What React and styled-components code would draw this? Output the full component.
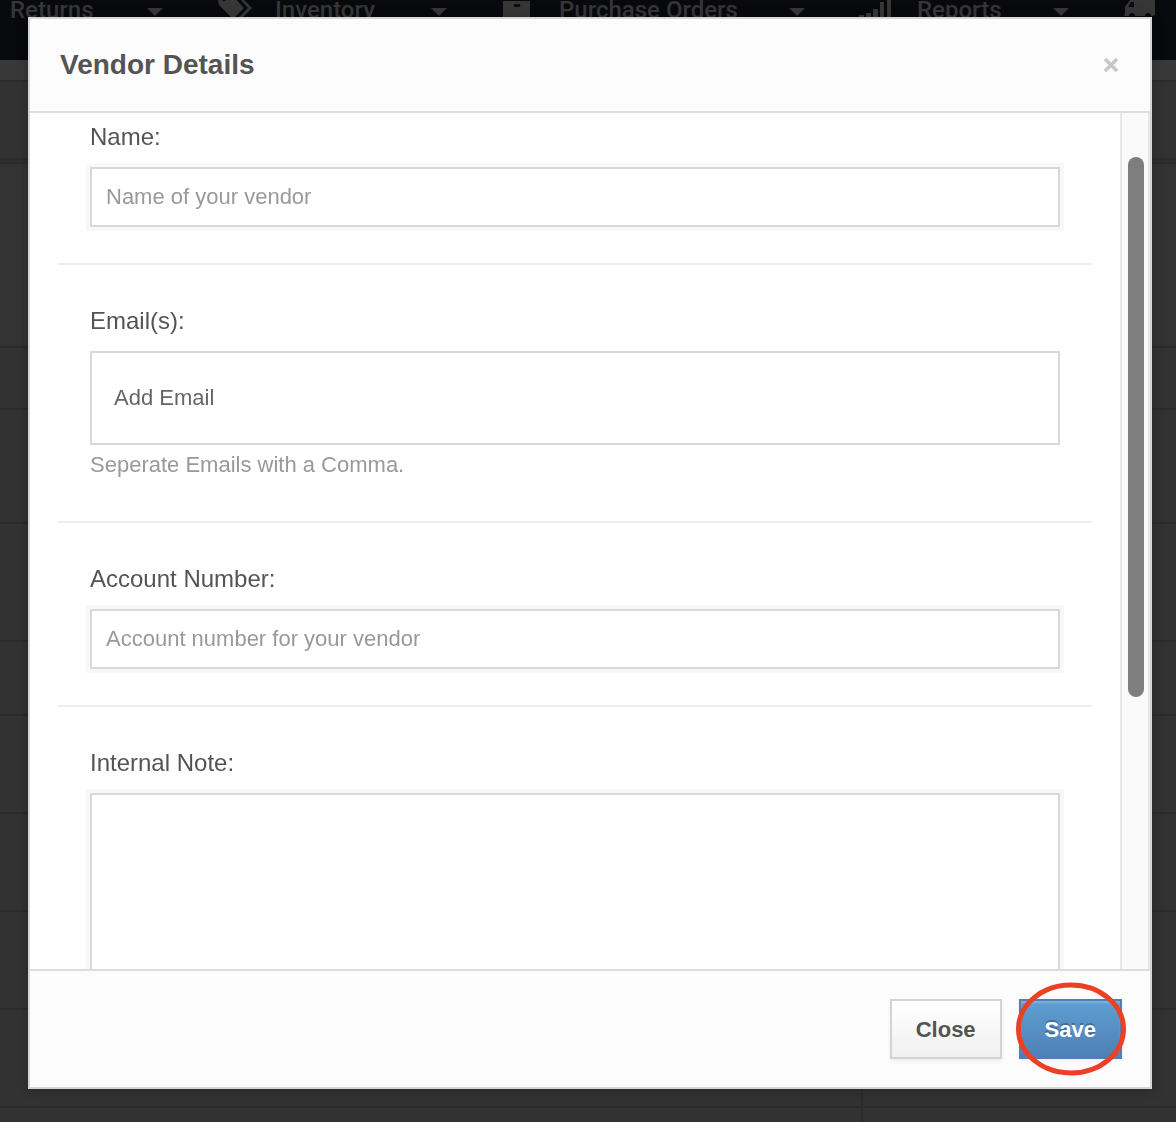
import React, { useState } from "react";
import styled, { createGlobalStyle } from "styled-components";

const GlobalStyle = createGlobalStyle`
  *, *::before, *::after { box-sizing: border-box; }
  body {
    margin: 0;
    background: #323232;
    color: #545454;
    font-family: "Liberation Sans", Arial, Helvetica, sans-serif;
  }
`;

const Page = styled.div`
  height: 100vh;
  overflow: hidden;
`;

const Nav = styled.nav`
  height: 60px;
  display: flex;
  align-items: flex-start;
  background: #08090d;
  overflow: hidden;
`;

const NavItem = styled.a`
  flex: none;
  width: ${(p) => p.$width}px;
  height: 20px;
  display: flex;
  align-items: center;
  padding-left: ${(p) => (p.$flush ? 10 : 0)}px;
  color: #363636;
  font: 500 24px/28px Roboto, Inter, sans-serif;
  text-decoration: none;
  white-space: nowrap;
`;

const NavIcon = styled.svg`
  flex: none;
  width: 36px;
  height: 28px;
  margin-right: 22px;
  fill: #363636;
`;

const Caret = styled.span`
  margin-left: auto;
  margin-right: 54px;
  margin-top: 4px;
  border: 8px solid transparent;
  border-top-color: #363636;
  border-bottom: 0;
`;

const PageRow = styled.div`
  display: grid;
  grid-template-columns: 1fr 313px;
  height: ${(p) => p.$height}px;
  border-bottom: 2px solid #2b2b2b;
  background: ${(p) => p.$tone || "#323232"};
`;

const PageCell = styled.div`
  border-right: 2px solid #2b2b2b;
`;

const Overlay = styled.div`
  position: fixed;
  inset: 0;
  display: flex;
  padding: 17px 24px 33px 28px;
`;

const Modal = styled.section`
  flex: 1;
  min-width: 0;
  display: flex;
  flex-direction: column;
  border: 2px solid #d6d6d6;
  background: #fff;
  box-shadow: 0 2px 12px rgba(0, 0, 0, 0.2);
`;

const Header = styled.header`
  display: flex;
  align-items: center;
  justify-content: space-between;
  padding: 28px 30px;
  border-bottom: 2px solid #dedede;
  background: #fcfcfc;
`;

const Title = styled.h2`
  margin: 0;
  font-size: 28px;
  line-height: 36px;
`;

const Dismiss = styled.button`
  display: flex;
  padding: 2px 1px;
  border: 0;
  background: none;
  svg {
    width: 16px;
    height: 16px;
    stroke: #c8c8c8;
    stroke-width: 3.6;
  }
`;

const Body = styled.div`
  flex: 1;
  min-height: 0;
  display: flex;
`;

const Form = styled.form`
  flex: 1;
  min-width: 0;
  padding: 0 28px;
  overflow-y: auto;
  scrollbar-width: none;
`;

const Field = styled.div`
  display: flex;
  flex-direction: column;
  padding: ${(p) => (p.$first ? 12 : 44)}px 32px 36px;
  border-bottom: 2px solid #eee;
`;

const Label = styled.label`
  margin-bottom: 18px;
  font-size: 24px;
  line-height: 24px;
`;

const Input = styled.input`
  width: 100%;
  height: ${(p) => (p.$tall ? 94 : 60)}px;
  padding: 0 ${(p) => (p.$tall ? 22 : 14)}px;
  border: 2px solid #d8d8d8;
  border-radius: 0;
  background: #fff;
  box-shadow: ${(p) => (p.$tall ? "none" : "0 0 0 4px #f8f8f8")};
  color: #545454;
  font: 22px/28px "Liberation Sans", Arial, sans-serif;
  outline: 0;
  &::placeholder {
    color: ${(p) => (p.$tall ? "#666" : "#999")};
    opacity: 1;
  }
`;

const TextArea = styled(Input)`
  height: 240px;
  padding: 14px;
  resize: none;
`;

const Help = styled.p`
  margin: 8px 0;
  color: #999;
  font-size: 22px;
  line-height: 24px;
`;

const ScrollTrack = styled.div`
  flex: none;
  width: 30px;
  padding: 44px 4px 0 6px;
  border: solid #e8e8e8;
  border-width: 0 2px;
  background: #fafafa;
`;

const ScrollThumb = styled.div`
  width: 16px;
  height: 540px;
  border-radius: 8px;
  background: #7e7e7e;
`;

const Footer = styled.footer`
  display: flex;
  justify-content: flex-end;
  gap: 17px;
  padding: 28px;
  border-top: 2px solid #dcdcdc;
  background: #fcfcfc;
`;

const Button = styled.button`
  height: 60px;
  padding: 2px 24px 0;
  border: 2px solid ${(p) => (p.$primary ? "#4d80b6" : "#d4d4d4")};
  border-radius: 0;
  background: ${(p) =>
    p.$primary
      ? "linear-gradient(#5e9fd3, #4f80b5)"
      : "linear-gradient(#fff, #f0f0f0)"};
  box-shadow: ${(p) =>
    p.$primary
      ? "inset 0 2px 2px rgba(255, 255, 255, 0.2), 0 2px 4px rgba(0, 0, 0, 0.06)"
      : "0 2px 4px rgba(0, 0, 0, 0.06)"};
  color: ${(p) => (p.$primary ? "#fff" : "#545454")};
  font: bold 22px/28px "Liberation Sans", Arial, sans-serif;
  text-shadow: ${(p) => (p.$primary ? "0 -2px 0 rgba(0, 0, 0, 0.25)" : "none")};
`;

const Highlighted = styled.div`
  position: relative;
`;

const Ring = styled.svg`
  position: absolute;
  left: 50%;
  top: 50%;
  width: 112px;
  height: 94px;
  transform: translate(-50%, -50%);
  fill: none;
  stroke: #eb4026;
  stroke-width: 5;
  pointer-events: none;
`;

const icons = {
  tags: (
    <>
      <path fillRule="evenodd" d="M1 0h15l11 12-11 11L3 10Q1 8 1 5ZM5 3a2 2 0 1 0 4 0a2 2 0 1 0-4 0Z" />
      <path d="M20 0h3l12 12-11 11-2-2 9-9Z" />
    </>
  ),
  box: <path fillRule="evenodd" d="M2 5h27v23H2ZM14 8q-3 1 0 3h4q3-2 0-3Z" />,
  chart: <path d="M0 19h5v9H0ZM7 17h5v11H7ZM14 13h5v15h-5ZM21 6h4v22h-4ZM28 2h4v26h-4Z" />,
  truck: (
    <path
      fillRule="evenodd"
      d="M12 3h20v16l-3 1h-1a3 3 0 0 0-6 0H12a3 3 0 0 0-6 0H2l-1-1 1-1V11l5-7ZM5 11h6V6H8Z"
    />
  ),
};

const navItems = [
  { text: "Returns", width: 217 },
  { text: "Inventory", width: 284, icon: "tags" },
  { text: "Purchase Orders", width: 358, icon: "box" },
  { text: "Reports", width: 264, icon: "chart" },
];

const pageRows = [
  { height: 22, tone: "#383838" },
  { height: 78 },
  { height: 4, tone: "#2e2e2e" },
  { height: 184, tone: "#333" },
  { height: 62 },
  { height: 114 },
  { height: 118 },
  { height: 74 },
  { height: 98 },
  { height: 98 },
  { height: 98 },
  { height: 98 },
  { height: 98 },
];

function Icon({ name }) {
  return (
    <NavIcon viewBox="0 0 36 28" aria-hidden="true">
      {icons[name]}
    </NavIcon>
  );
}

export default function App() {
  const [values, setValues] = useState({ name: "", emails: "", account: "", note: "" });
  const bind = (key) => ({
    id: key,
    value: values[key],
    onChange: (e) => setValues({ ...values, [key]: e.target.value }),
  });

  return (
    <>
      <GlobalStyle />
      <Page>
        <Nav>
          {navItems.map((item) => (
            <NavItem key={item.text} href="#" $width={item.width} $flush={!item.icon}>
              {item.icon && <Icon name={item.icon} />}
              {item.text}
              <Caret />
            </NavItem>
          ))}
          <NavItem href="#" $width={60} aria-label="Shipping">
            <Icon name="truck" />
          </NavItem>
        </Nav>
        {pageRows.map((row, i) => (
          <PageRow key={i} $height={row.height} $tone={row.tone}>
            {i > 8 && <PageCell />}
          </PageRow>
        ))}
      </Page>
      <Overlay>
        <Modal role="dialog" aria-labelledby="modal-title">
          <Header>
            <Title id="modal-title">Vendor Details</Title>
            <Dismiss type="button" aria-label="Dismiss">
              <svg viewBox="0 0 16 16">
                <path d="M2 2L14 14M14 2L2 14" />
              </svg>
            </Dismiss>
          </Header>
          <Body>
            <Form id="vendor-form">
              <Field $first>
                <Label htmlFor="name">Name:</Label>
                <Input {...bind("name")} placeholder="Name of your vendor" />
              </Field>
              <Field>
                <Label htmlFor="emails">Email(s):</Label>
                <Input {...bind("emails")} $tall placeholder="Add Email" />
                <Help>Seperate Emails with a Comma.</Help>
              </Field>
              <Field>
                <Label htmlFor="account">Account Number:</Label>
                <Input {...bind("account")} placeholder="Account number for your vendor" />
              </Field>
              <Field>
                <Label htmlFor="note">Internal Note:</Label>
                <TextArea as="textarea" {...bind("note")} />
              </Field>
            </Form>
            <ScrollTrack>
              <ScrollThumb />
            </ScrollTrack>
          </Body>
          <Footer>
            <Button type="button">Close</Button>
            <Highlighted>
              <Button type="button" $primary>
                Save
              </Button>
              <Ring viewBox="0 0 112 94" aria-hidden="true">
                <ellipse cx="57" cy="47" rx="52.5" ry="44" />
              </Ring>
            </Highlighted>
          </Footer>
        </Modal>
      </Overlay>
    </>
  );
}
